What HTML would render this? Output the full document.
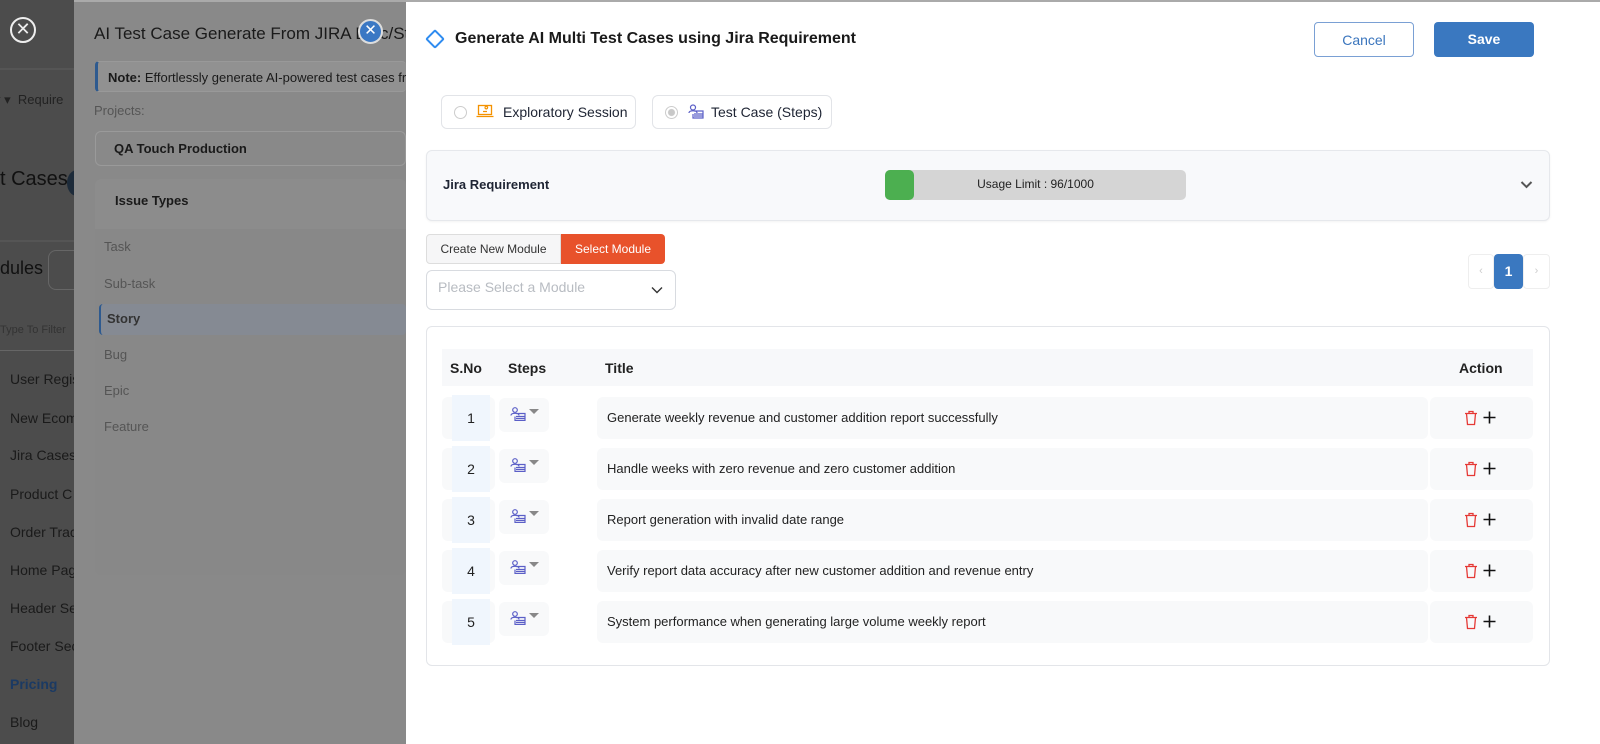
<!DOCTYPE html>
<html><head><style>
*{box-sizing:border-box;margin:0;padding:0}
body{width:1600px;height:744px;overflow:hidden;position:relative;font-family:"Liberation Sans",sans-serif;background:#fff}
.a{position:absolute}
.bg{left:0;top:0;width:74px;height:744px;background:#4c4c4c}
.mid{left:74px;top:2px;width:332px;height:742px;background:#898989}
.dt{color:#1a1a1a;font-size:14px}
.rp{left:406px;top:2px;width:1194px;height:742px;background:#fff}
.btn{border-radius:4px;font-size:14px;text-align:center;line-height:34px}
.tr{background:#f8f9fa;border-radius:6px}
.txt{font-size:13px;color:#222}
</style></head><body>
<div class="a" style="left:0;top:0;width:1600px;height:2px;background:#aaa"></div>
<div class="a bg"></div>
<div class="a" style="left:0;top:68px;width:74px;height:2px;background:#555"></div>
<div class="a" style="left:10px;top:17px;width:26px;height:26px;border:2px solid #eee;border-radius:50%;color:#eee;font-size:18px;text-align:center;line-height:21px">✕</div>
<div class="a dt" style="left:-6px;top:92px;color:#222;font-size:13px">v ▾ &nbsp;Require</div>
<div class="a" style="left:0;top:168px;font-size:20px;color:#111">t Cases</div>
<div class="a" style="left:67px;top:170px;width:20px;height:26px;border-radius:50%;background:#1d2b3a"></div>
<div class="a" style="left:0;top:240px;width:74px;height:2px;background:#555"></div>
<div class="a" style="left:0;top:258px;font-size:18px;color:#111">dules</div>
<div class="a" style="left:48px;top:250px;width:40px;height:40px;border:1px solid #666;border-radius:8px"></div>
<div class="a" style="left:0;top:324px;font-size:11px;color:#333">Type To Filter</div>
<div class="a" style="left:0;top:350px;width:74px;height:1px;background:#666"></div>
<div class="a dt" style="left:10px;top:371px">User Regis</div>
<div class="a dt" style="left:10px;top:410px">New Ecom</div>
<div class="a dt" style="left:10px;top:447px">Jira Cases</div>
<div class="a dt" style="left:10px;top:486px">Product C</div>
<div class="a dt" style="left:10px;top:524px">Order Trac</div>
<div class="a dt" style="left:10px;top:562px">Home Pag</div>
<div class="a dt" style="left:10px;top:600px">Header Se</div>
<div class="a dt" style="left:10px;top:638px">Footer Sec</div>
<div class="a dt" style="left:10px;top:676px;color:#1b3a63;font-weight:bold">Pricing</div>
<div class="a dt" style="left:10px;top:714px">Blog</div>
<div class="a mid"></div>
<div class="a" style="left:94px;top:24px;font-size:17px;color:#1a1a1a;white-space:nowrap;width:312px;overflow:hidden">AI Test Case Generate From JIRA Epic/Story</div>
<div class="a" style="left:358px;top:19px;width:25px;height:25px;border-radius:50%;background:#3b78c4;border:2px solid #ddd;color:#fff;text-align:center;line-height:20px;font-size:15px">✕</div>
<div class="a" style="left:95px;top:61px;width:311px;height:31px;background:#919191;border-left:3px solid #2e5a8f;border-radius:4px;border-top:1px solid #999;border-bottom:1px solid #999;font-size:13px;color:#1a1a1a;padding:8px 10px;white-space:nowrap;overflow:hidden"><b>Note:</b> Effortlessly generate AI-powered test cases from</div>
<div class="a" style="left:94px;top:103px;font-size:13px;color:#555">Projects:</div>
<div class="a" style="left:95px;top:131px;width:311px;height:35px;border:1px solid #9a9a9a;border-radius:6px;font-size:13px;color:#1a1a1a;padding:9px 18px;font-weight:bold">QA Touch Production</div>
<div class="a" style="left:95px;top:179px;width:311px;height:396px;background:#888;border-radius:6px"></div>
<div class="a" style="left:95px;top:179px;width:311px;height:50px;background:#8c8c8c;border-radius:6px 6px 0 0"></div>
<div class="a" style="left:115px;top:193px;font-size:13px;font-weight:bold;color:#1a1a1a">Issue Types</div>
<div class="a" style="left:104px;top:239px;font-size:13px;color:#555">Task</div>
<div class="a" style="left:104px;top:276px;font-size:13px;color:#555">Sub-task</div>
<div class="a" style="left:99px;top:304px;width:307px;height:31px;background:#858a93;border-left:2px solid #2e5a8f;border-radius:4px"></div>
<div class="a" style="left:107px;top:311px;font-size:13px;color:#333;font-weight:bold">Story</div>
<div class="a" style="left:104px;top:347px;font-size:13px;color:#555">Bug</div>
<div class="a" style="left:104px;top:383px;font-size:13px;color:#555">Epic</div>
<div class="a" style="left:104px;top:419px;font-size:13px;color:#555">Feature</div>

<div class="a rp"></div>
<div class="a" style="left:428px;top:32px;width:14px;height:14px;border:2px solid #2f8cf0;transform:rotate(45deg);border-radius:2px"></div>
<div class="a" style="left:455px;top:30px;font-size:16px;font-weight:bold;color:#1a1a1a">Generate AI Multi Test Cases using Jira Requirement</div>
<div class="a btn" style="left:1314px;top:22px;width:100px;height:35px;border:1px solid #7aa0d4;color:#3a75bd">Cancel</div>
<div class="a btn" style="left:1434px;top:22px;width:100px;height:35px;background:#3a78c0;color:#fff;font-weight:bold">Save</div>

<div class="a" style="left:441px;top:95px;width:195px;height:34px;border:1px solid #e2e4e8;border-radius:6px"></div>
<div class="a" style="left:454px;top:106px;width:13px;height:13px;border:1px solid #ccc;border-radius:50%"></div>
<svg class="a" style="left:476px;top:104px" width="18" height="15" viewBox="0 0 18 15"><rect x="2.5" y="1.5" width="13" height="9" fill="none" stroke="#f39200" stroke-width="1.3"/><path d="M0.5 12.5h17M7 7.5h4M9 3.5a1.3 1.3 0 1 1 0 .1" stroke="#f39200" stroke-width="1.3" fill="none"/></svg>
<div class="a" style="left:503px;top:104px;font-size:14px;color:#1e2433">Exploratory Session</div>
<div class="a" style="left:652px;top:95px;width:180px;height:34px;border:1px solid #e2e4e8;border-radius:6px"></div>
<div class="a" style="left:665px;top:106px;width:13px;height:13px;border:1px solid #ccc;border-radius:50%;background:radial-gradient(#c8c8c8 40%,#fff 50%)"></div>
<svg class="a" style="left:688px;top:104px" width="16" height="15" viewBox="0 0 16 15"><circle cx="5" cy="3.5" r="2.5" fill="none" stroke="#5b5fc7" stroke-width="1.2"/><path d="M1 9c0-3 8-3 8 0M6 7h9v7H5v-4M6 10h9M6 12h9" fill="none" stroke="#5b5fc7" stroke-width="1.2"/></svg>
<div class="a" style="left:711px;top:104px;font-size:14px;color:#1e2433">Test Case (Steps)</div>

<div class="a" style="left:426px;top:150px;width:1124px;height:71px;background:#f8f9fb;border:1px solid #e6e8ec;border-radius:6px;box-shadow:0 1px 2px rgba(0,0,0,.05)"></div>
<div class="a" style="left:443px;top:177px;font-size:13px;font-weight:bold;color:#1e2433">Jira Requirement</div>
<div class="a" style="left:885px;top:170px;width:301px;height:30px;background:#d5d5d5;border-radius:5px"></div>
<div class="a" style="left:885px;top:170px;width:29px;height:30px;background:#4caf50;border-radius:5px"></div>
<div class="a" style="left:885px;top:177px;width:301px;text-align:center;font-size:12px;color:#222">Usage Limit : 96/1000</div>
<svg class="a" style="left:1520px;top:180px" width="13" height="9" viewBox="0 0 13 9"><path d="M1.5 2l5 5 5-5" fill="none" stroke="#555" stroke-width="2"/></svg>

<div class="a" style="left:426px;top:234px;width:135px;height:30px;background:#f6f6f7;border:1px solid #ddd;border-radius:4px 0 0 4px;font-size:12px;color:#333;text-align:center;line-height:28px">Create New Module</div>
<div class="a" style="left:561px;top:234px;width:104px;height:30px;background:#e8522b;border-radius:0 4px 4px 0;font-size:12px;color:#fff;text-align:center;line-height:30px">Select Module</div>
<div class="a" style="left:426px;top:270px;width:250px;height:40px;border:1px solid #d8dbe0;border-radius:6px"></div>
<div class="a" style="left:438px;top:279px;font-size:14px;color:#b8bcc2">Please Select a Module</div>
<svg class="a" style="left:651px;top:286px" width="12" height="8" viewBox="0 0 12 8"><path d="M1 1.5l5 5 5-5" fill="none" stroke="#333" stroke-width="1.4"/></svg>

<div class="a" style="left:1468px;top:254px;width:26px;height:35px;border:1px solid #eee;border-radius:4px;color:#ccc;font-size:11px;text-align:center;line-height:33px">‹</div>
<div class="a" style="left:1494px;top:254px;width:29px;height:35px;background:#3a78c0;border-radius:4px;color:#fff;font-size:14px;font-weight:bold;text-align:center;line-height:35px">1</div>
<div class="a" style="left:1523px;top:254px;width:27px;height:35px;border:1px solid #eee;border-radius:4px;color:#ccc;font-size:11px;text-align:center;line-height:33px">›</div>

<div class="a" style="left:426px;top:326px;width:1124px;height:340px;border:1px solid #e3e5e9;border-radius:6px"></div>
<div class="a" style="left:442px;top:349px;width:1091px;height:37px;background:#f7f8fa"></div>
<div class="a" style="left:450px;top:360px;font-size:14px;font-weight:bold;color:#222">S.No</div>
<div class="a" style="left:508px;top:360px;font-size:14px;font-weight:bold;color:#222">Steps</div>
<div class="a" style="left:605px;top:360px;font-size:14px;font-weight:bold;color:#222">Title</div>
<div class="a" style="left:1459px;top:360px;font-size:14px;font-weight:bold;color:#222">Action</div>

<div id="rows"></div>
<script>
var t=["Generate weekly revenue and customer addition report successfully","Handle weeks with zero revenue and zero customer addition","Report generation with invalid date range","Verify report data accuracy after new customer addition and revenue entry","System performance when generating large volume weekly report"];
var h="";
for(var i=0;i<5;i++){var y=397+i*51;
h+='<div class="a tr" style="left:442px;top:'+y+'px;width:53px;height:42px"></div>';
h+='<div class="a" style="left:452px;top:'+(y-2)+'px;width:38px;height:46px;background:#f0f6fd"></div>';
h+='<div class="a" style="left:452px;top:'+(y+13)+'px;width:38px;text-align:center;font-size:14px;color:#222">'+(i+1)+'</div>';
h+='<div class="a tr" style="left:499px;top:'+(y+1)+'px;width:50px;height:34px"></div>';
h+='<svg class="a" style="left:510px;top:'+(y+10)+'px" width="16" height="14" viewBox="0 0 16 14"><circle cx="5" cy="3" r="2.3" fill="none" stroke="#5b5fc7" stroke-width="1.2"/><path d="M1 8.5c0-3 8-3 8 0M6 6.5h9v7H5v-4M6 9.5h9M6 11.5h9" fill="none" stroke="#5b5fc7" stroke-width="1.2"/></svg>';
h+='<div class="a" style="left:529px;top:'+(y+12)+'px;width:0;height:0;border-left:5px solid transparent;border-right:5px solid transparent;border-top:5px solid #888"></div>';
h+='<div class="a tr" style="left:597px;top:'+y+'px;width:831px;height:42px"></div>';
h+='<div class="a txt" style="left:607px;top:'+(y+13)+'px">'+t[i]+'</div>';
h+='<div class="a tr" style="left:1430px;top:'+y+'px;width:103px;height:42px"></div>';
h+='<svg class="a" style="left:1464px;top:'+(y+13)+'px" width="14" height="16" viewBox="0 0 14 16"><path d="M1 3.5h12M5 3.5V1.5h4v2M2.5 3.5l1 11h7l1-11" fill="none" stroke="#e53935" stroke-width="1.3"/></svg>';
h+='<svg class="a" style="left:1483px;top:'+(y+14)+'px" width="13" height="13" viewBox="0 0 13 13"><path d="M6.5 0.5v12M0.5 6.5h12" stroke="#111" stroke-width="1.6"/></svg>';}
document.getElementById("rows").innerHTML=h;
</script>
</body></html>
